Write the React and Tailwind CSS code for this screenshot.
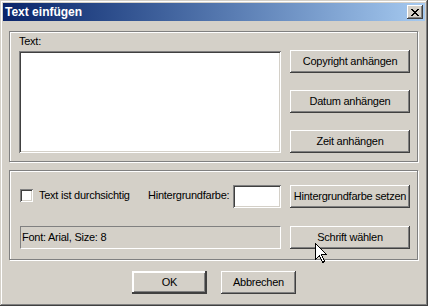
import { useState } from 'react';

const raised =
  'shadow-[inset_-1px_-1px_0_#404040,inset_1px_1px_0_#ffffff,inset_-2px_-2px_0_#808080,inset_2px_2px_0_#d4d0c8]';
const sunken =
  'shadow-[inset_1px_1px_0_#808080,inset_-1px_-1px_0_#ffffff,inset_2px_2px_0_#404040,inset_-2px_-2px_0_#d4d0c8]';
const etched =
  'border border-[#808080] shadow-[1px_1px_0_#ffffff,inset_1px_1px_0_#ffffff]';

function Button({ children, className = '', isDefault = false }) {
  return (
    <button
      type="button"
      className={`flex items-center justify-center bg-[#d4d0c8] text-black leading-[13px] tracking-[-0.25px] ${
        isDefault
          ? 'shadow-[inset_-2px_-2px_0_#404040,inset_2px_2px_0_#ffffff,inset_-3px_-3px_0_#808080,inset_0_0_0_1px_#000]'
          : raised
      } ${className}`}
    >
      {children}
    </button>
  );
}

function CloseGlyph() {
  // classic 8x7 pixel cross
  const rows = [
    [0, 1, 6, 7],
    [1, 2, 5, 6],
    [2, 3, 4, 5],
    [3, 4],
    [2, 3, 4, 5],
    [1, 2, 5, 6],
    [0, 1, 6, 7],
  ];
  return (
    <svg width="8" height="7" viewBox="0 0 8 7" shapeRendering="crispEdges">
      {rows.map((cols, y) =>
        cols.map((x) => <rect key={`${x}-${y}`} x={x} y={y} width="1" height="1" fill="#000" />)
      )}
    </svg>
  );
}

function Cursor() {
  return (
    <svg
      className="absolute left-[315px] top-[243px]"
      width="13"
      height="21"
      viewBox="0 0 13 21"
      shapeRendering="crispEdges"
    >
      <path
        d="M0.5 0.5 L0.5 16.5 L4.5 12.5 L7.5 19.5 L9.5 18.5 L6.5 11.5 L11.5 11.5 Z"
        fill="#fff"
        stroke="#000"
        strokeWidth="1"
      />
    </svg>
  );
}

export default function App() {
  const [text, setText] = useState('');
  const [transparent, setTransparent] = useState(false);

  return (
    <div
      className={`relative w-[428px] h-[306px] bg-[#d4d0c8] p-[3px] text-[11px] text-black font-['Liberation_Sans',Arial,sans-serif] shadow-[inset_-1px_-1px_0_#404040,inset_1px_1px_0_#d4d0c8,inset_-2px_-2px_0_#808080,inset_2px_2px_0_#ffffff]`}
    >
      {/* title bar */}
      <div className="flex h-[18px] items-center bg-linear-to-r from-[#0a246a] to-[#a6caf0] pl-[2px] pr-[2px]">
        <span className="font-bold text-white text-[12px] leading-[14px]">Text einfügen</span>
        <button
          type="button"
          className={`ml-auto flex h-[14px] w-[16px] items-center justify-center bg-[#d4d0c8] ${raised}`}
        >
          <CloseGlyph />
        </button>
      </div>

      {/* group 1 */}
      <div className={`ml-[6px] mt-[10px] flex h-[131px] w-[409px] items-start pl-[9px] tracking-[-0.25px] ${etched}`}>
        <div className="flex flex-col pt-[3px]">
          <span className="mb-[3px] leading-[13px]">Text:</span>
          <textarea
            value={text}
            onChange={(e) => setText(e.target.value)}
            className={`h-[102px] w-[262px] resize-none bg-white p-[3px] outline-none ${sunken}`}
          />
        </div>
        <div className="ml-[9px] mt-[18px] flex flex-col gap-[17px]">
          <Button className="h-[23px] w-[120px]">Copyright anhängen</Button>
          <Button className="h-[23px] w-[120px]">Datum anhängen</Button>
          <Button className="h-[23px] w-[120px]">Zeit anhängen</Button>
        </div>
      </div>

      {/* group 2 */}
      <div className={`ml-[6px] mt-[8px] flex h-[90px] w-[409px] flex-col pl-[9px] pt-[14px] tracking-[-0.25px] ${etched}`}>
        <div className="flex h-[23px] items-start">
          <button
            type="button"
            onClick={() => setTransparent(!transparent)}
            className={`ml-[1px] mt-[4px] h-[13px] w-[13px] bg-white ${sunken}`}
          />
          <span className="ml-[6px] mt-[4px] w-[109px] leading-[13px]">Text ist durchsichtig</span>
          <span className="mt-[4px] w-[85px] leading-[13px]">Hintergrundfarbe:</span>
          <div className={`h-[23px] w-[48px] bg-white ${sunken}`} />
          <Button className="ml-[9px] h-[23px] w-[120px]">Hintergrundfarbe setzen</Button>
        </div>
        <div className="mt-[18px] flex h-[23px] items-start">
          <div className="ml-[1px] flex h-[23px] w-[261px] items-center border border-t-[#808080] border-l-[#808080] border-b-white border-r-white pl-[1px] leading-[13px]">
            Font: Arial, Size: 8
          </div>
          <Button className="ml-[9px] h-[23px] w-[120px]">Schrift wählen</Button>
        </div>
      </div>

      {/* bottom buttons */}
      <div className="mt-[11px] flex justify-center gap-[14px]">
        <Button isDefault className="h-[23px] w-[75px]">OK</Button>
        <Button className="h-[23px] w-[75px]">Abbrechen</Button>
      </div>

      <Cursor />
    </div>
  );
}
